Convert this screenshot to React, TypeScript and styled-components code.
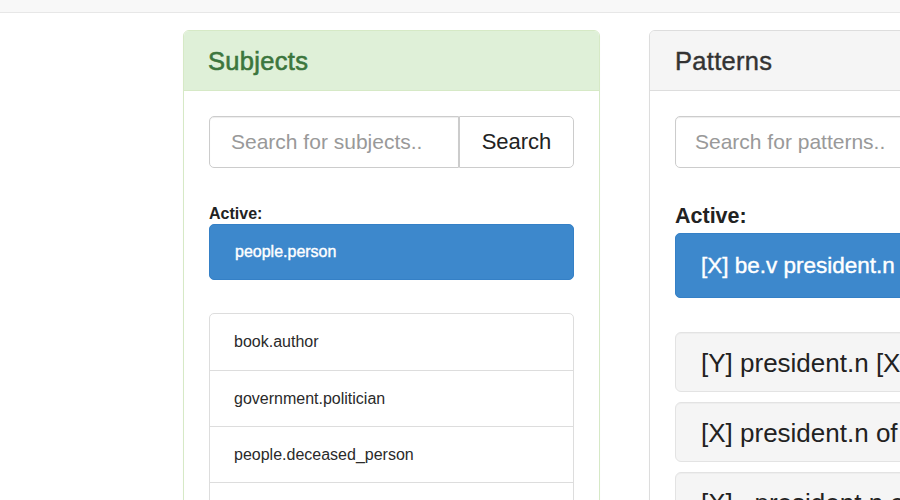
import React from "react";
import styled, { createGlobalStyle } from "styled-components";

const Global = createGlobalStyle`
  html, body { margin: 0; padding: 0; background: #fff; }
  body {
    width: 900px;
    height: 500px;
    overflow: hidden;
    font-family: "Liberation Sans", Arial, Helvetica, sans-serif;
    color: #333;
  }
  * { box-sizing: border-box; }
`;

const NavBar = styled.div`
  height: 13px;
  background: #f8f8f8;
  border-bottom: 1px solid #e7e7e7;
`;

const Main = styled.div`
  display: flex;
  gap: 49px;
  padding: 17px 0 0 183px;
  width: 1500px;
`;

type Tone = "success" | "default";

const Panel = styled.section<{ $tone: Tone }>`
  width: 417px;
  flex: none;
  border: 1px solid ${(p) => (p.$tone === "success" ? "#d6e9c6" : "#dddddd")};
  border-radius: 6px;
  background: #fff;
  box-shadow: 0 1px 1px rgba(0, 0, 0, 0.05);
  height: 520px;
  overflow: hidden;
`;

const PanelHeading = styled.header<{ $tone: Tone; $pad: number }>`
  height: 60px;
  display: flex;
  align-items: center;
  padding: 0 ${(p) => p.$pad}px;
  background: ${(p) => (p.$tone === "success" ? "#dff0d8" : "#f5f5f5")};
  border-bottom: 1px solid ${(p) => (p.$tone === "success" ? "#d6e9c6" : "#dddddd")};
`;

const PanelTitle = styled.h3<{ $tone: Tone }>`
  margin: 0;
  font-size: 25.5px;
  line-height: 30px;
  font-weight: 400;
  letter-spacing: 0.3px;
  color: ${(p) => (p.$tone === "success" ? "#3c763d" : "#333333")};
  -webkit-text-stroke: ${(p) => (p.$tone === "success" ? "0.6px" : "0.4px")} currentColor;
`;

const PanelBody = styled.div<{ $pad: number }>`
  padding: 25px ${(p) => p.$pad}px;
`;

const InputGroup = styled.div`
  display: flex;
  height: 52px;
`;

const SearchInput = styled.input<{ $indent: number }>`
  flex: 1;
  min-width: 0;
  height: 52px;
  border: 1px solid #cccccc;
  border-radius: 5px 0 0 5px;
  padding: 0 ${(p) => p.$indent}px;
  font-family: inherit;
  font-size: 21px;
  color: #555;
  box-shadow: inset 0 1px 1px rgba(0, 0, 0, 0.075);
  outline: none;
  &::placeholder { color: #999999; }
`;

const SearchButton = styled.button`
  flex: none;
  width: 115px;
  height: 52px;
  border: 1px solid #cccccc;
  border-radius: 0 5px 5px 0;
  background: #fff;
  font-family: inherit;
  font-size: 22px;
  color: #222;
  padding: 0;
`;

const ActiveLabel = styled.div<{ $size: number; $top: number; $gap: number }>`
  margin-top: ${(p) => p.$top}px;
  margin-bottom: ${(p) => p.$gap}px;
  font-size: ${(p) => p.$size}px;
  line-height: ${(p) => Math.round(p.$size * 1.12)}px;
  font-weight: 700;
  color: #222;
`;

const ActiveItem = styled.div<{ $size: number; $height: number }>`
  height: ${(p) => p.$height}px;
  display: flex;
  align-items: center;
  padding: 0 25px;
  background: #3d88cc;
  border: 1px solid #3580c6;
  border-radius: 5px;
  color: #fff;
  font-size: ${(p) => p.$size}px;
  white-space: nowrap;
  -webkit-text-stroke: 0.4px #fff;
`;

const ListGroup = styled.ul`
  list-style: none;
  margin: 33px 0 0;
  padding: 0;
  border: 1px solid #dddddd;
  border-radius: 5px;
`;

const ListItem = styled.li`
  height: 56px;
  display: flex;
  align-items: center;
  padding: 0 24px;
  font-size: 16px;
  color: #2a2a2a;
  & + & { border-top: 1px solid #dddddd; }
`;

const PatternList = styled.div`
  margin-top: 34px;
  display: flex;
  flex-direction: column;
  gap: 10px;
`;

const PatternItem = styled.div`
  height: 60px;
  display: flex;
  align-items: center;
  padding: 2px 25px 0;
  background: #f5f5f5;
  border: 1px solid #e3e3e3;
  border-radius: 6px;
  font-size: 26px;
  color: #222;
  white-space: nowrap;
  box-shadow: inset 0 1px 1px rgba(0, 0, 0, 0.03);
`;

const subjects = [
  "book.author",
  "government.politician",
  "people.deceased_person",
  "award.award_winner",
];

const patterns = [
  "[Y] president.n [X]",
  "[X] president.n of [Y]",
  "[X] , president.n of [Y]",
];

export default function App() {
  return (
    <>
      <Global />
      <NavBar />
      <Main>
        <Panel $tone="success">
          <PanelHeading $tone="success" $pad={24}>
            <PanelTitle $tone="success">Subjects</PanelTitle>
          </PanelHeading>
          <PanelBody $pad={25}>
            <InputGroup>
              <SearchInput $indent={21} placeholder="Search for subjects.." />
              <SearchButton>Search</SearchButton>
            </InputGroup>
            <ActiveLabel $size={16} $top={37} $gap={1}>Active:</ActiveLabel>
            <ActiveItem $size={16} $height={56}>people.person</ActiveItem>
            <ListGroup>
              {subjects.map((s) => (
                <ListItem key={s}>{s}</ListItem>
              ))}
            </ListGroup>
          </PanelBody>
        </Panel>
        <Panel $tone="default">
          <PanelHeading $tone="default" $pad={25}>
            <PanelTitle $tone="default">Patterns</PanelTitle>
          </PanelHeading>
          <PanelBody $pad={25}>
            <InputGroup>
              <SearchInput $indent={19} placeholder="Search for patterns.." />
              <SearchButton>Search</SearchButton>
            </InputGroup>
            <ActiveLabel $size={21.5} $top={36} $gap={5}>Active:</ActiveLabel>
            <ActiveItem $size={22.5} $height={65}>[X] be.v president.n</ActiveItem>
            <PatternList>
              {patterns.map((p) => (
                <PatternItem key={p}>{p}</PatternItem>
              ))}
            </PatternList>
          </PanelBody>
        </Panel>
      </Main>
    </>
  );
}
